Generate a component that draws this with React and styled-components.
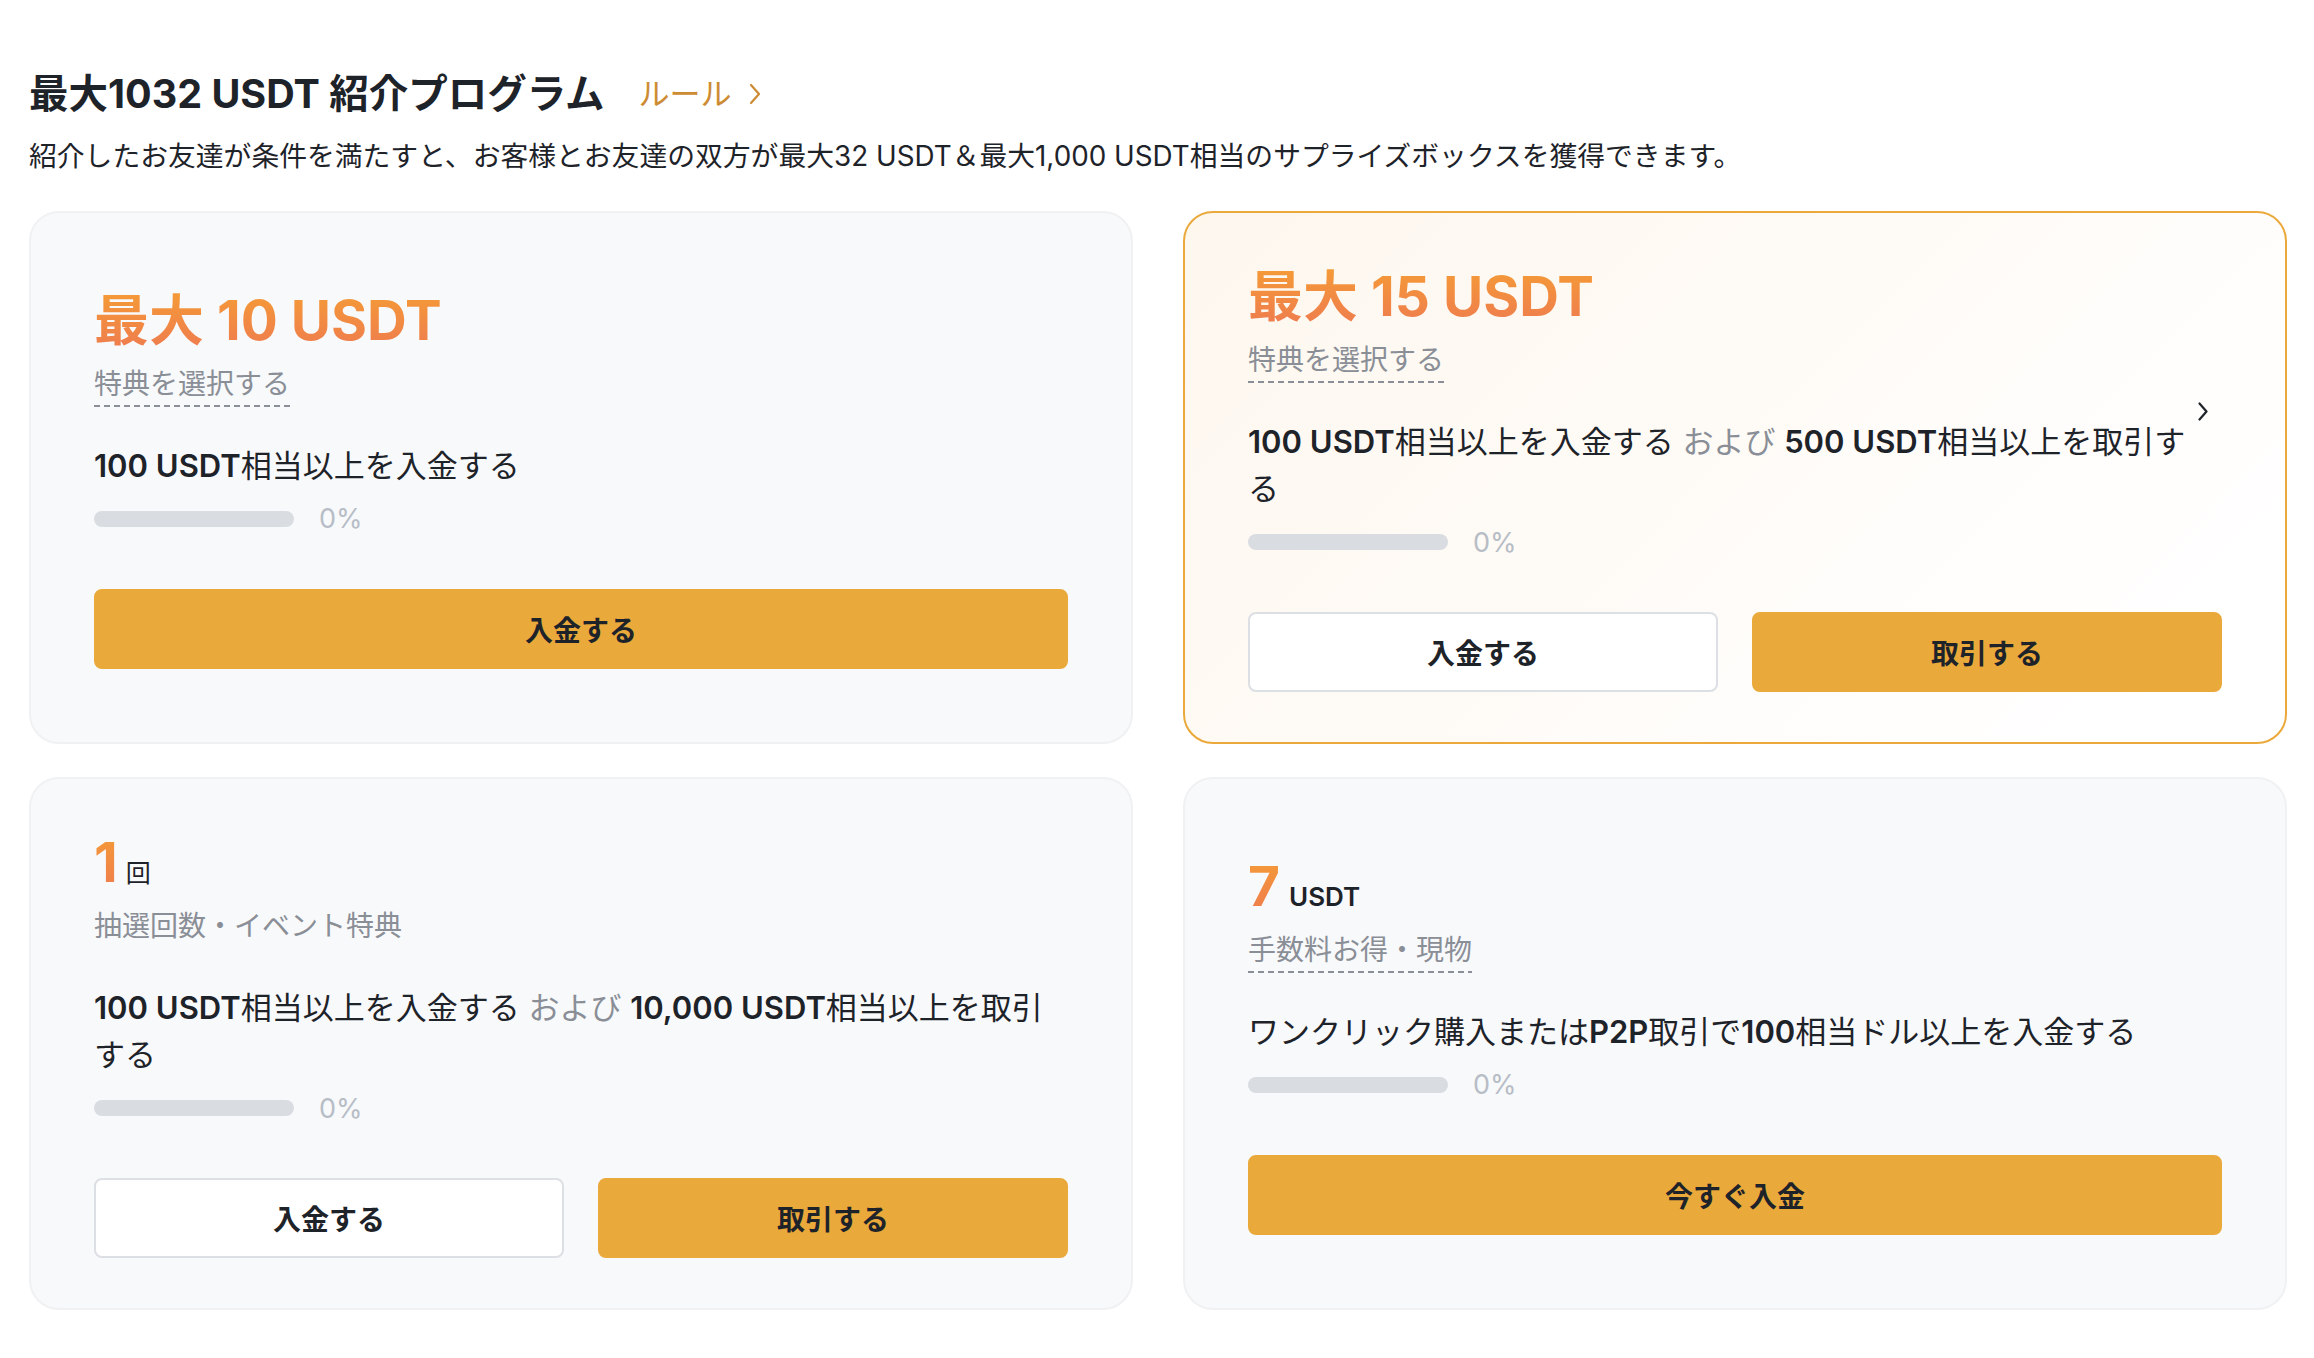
import React from 'react';
import styled, { createGlobalStyle } from 'styled-components';

const GlobalStyle = createGlobalStyle`
  body {
    margin: 0;
    background: #ffffff;
    color: #1e2329;
    font-family: Inter, "Noto Sans CJK JP", sans-serif;
  }
`;

const Page = styled.main`
  padding: 69px 27px 40px 29px;
`;

const TitleRow = styled.div`
  display: flex;
  align-items: center;
  gap: 34px;
`;

const Title = styled.h1`
  margin: 0;
  font-size: 39.5px;
  line-height: 50px;
  font-weight: 700;
  color: #1e2329;
`;

const RuleLink = styled.a`
  display: flex;
  align-items: center;
  gap: 18px;
  font-size: 31px;
  line-height: 40px;
  color: #cd8c33;
  text-decoration: none;
`;

const Intro = styled.p`
  margin: 18px 0 0;
  font-size: 27.8px;
  line-height: 38px;
  color: #1e2329;
`;

const Grid = styled.div`
  margin-top: 36px;
  display: grid;
  grid-template-columns: 1fr 1fr;
  column-gap: 50px;
  row-gap: 33px;
`;

const Card = styled.section`
  display: flex;
  flex-direction: column;
  justify-content: center;
  padding: 50px 63px;
  border-radius: 30px;
  border: 2px solid ${(p) => (p.$active ? '#eba93b' : '#f0f1f3')};
  background: ${(p) =>
    p.$active
      ? 'linear-gradient(135deg, #fdf7ee 0%, #fefaf5 40%, #fffefd 75%, #ffffff 100%)'
      : '#f8f9fb'};
`;

const Reward = styled.div`
  font-size: 55px;
  line-height: 67px;
  font-weight: 700;
  white-space: nowrap;
`;

const Gradient = styled.span`
  background: linear-gradient(180deg, #f59d35 0%, #ee7a50 100%);
  -webkit-background-clip: text;
  background-clip: text;
  color: transparent;
`;

const Unit = styled.span`
  margin-left: ${(p) => p.$gap}px;
  font-size: ${(p) => p.$size}px;
  font-weight: ${(p) => p.$weight};
  line-height: 1;
  color: #1e2329;
`;

const Label = styled.div`
  align-self: flex-start;
  margin-top: 12px;
  padding-bottom: 5px;
  font-size: 28px;
  line-height: 36px;
  color: #8a8e96;
  background: ${(p) =>
    p.$dashed
      ? 'repeating-linear-gradient(to right, #8a8e96 0 6px, transparent 6px 10px) left bottom / 100% 2px no-repeat'
      : 'none'};
`;

const ConditionRow = styled.div`
  margin-top: 35px;
  display: flex;
  gap: 8px;
`;

const Condition = styled.p`
  flex: 1;
  margin: 0;
  font-size: 31px;
  line-height: 47px;
  color: #1e2329;
`;

const Strong = styled.span`
  font-weight: 600;
`;

const Muted = styled.span`
  color: #8a8e96;
`;

const Chevron = styled.svg`
  flex: none;
  align-self: flex-start;
  margin: -16px 14px 0 0;
`;

const ProgressRow = styled.div`
  margin-top: 12px;
  height: 36px;
  display: flex;
  align-items: center;
  gap: 25px;
`;

const Track = styled.div`
  width: 200px;
  height: 16px;
  border-radius: 8px;
  background: #d9dce1;
  overflow: hidden;
`;

const Fill = styled.div`
  height: 100%;
  background: #eaa93b;
`;

const Percent = styled.span`
  font-size: 27px;
  color: #b7bdc6;
`;

const Actions = styled.div`
  margin-top: 52px;
  display: flex;
  gap: 34px;
`;

const Button = styled.button`
  flex: 1;
  height: 80px;
  border-radius: 8px;
  font-family: inherit;
  font-size: 28px;
  font-weight: 700;
  color: #1e2329;
  cursor: pointer;
  border: 2px solid ${(p) => (p.$outline ? '#dcdfe3' : '#eaa93b')};
  background: ${(p) => (p.$outline ? '#ffffff' : '#eaa93b')};
`;

const cards = [
  {
    id: 'deposit',
    reward: <Gradient>最大 10 USDT</Gradient>,
    label: '特典を選択する',
    dashed: true,
    condition: (
      <>
        <Strong>100 USDT</Strong>相当以上を入金する
      </>
    ),
    buttons: [{ text: '入金する' }],
  },
  {
    id: 'trade',
    active: true,
    arrow: true,
    reward: <Gradient>最大 15 USDT</Gradient>,
    label: '特典を選択する',
    dashed: true,
    condition: (
      <>
        <Strong>100 USDT</Strong>相当以上を入金する <Muted>および</Muted>{' '}
        <Strong>500 USDT</Strong>相当以上を取引する
      </>
    ),
    buttons: [{ text: '入金する', outline: true }, { text: '取引する' }],
  },
  {
    id: 'lottery',
    reward: (
      <>
        <Gradient>1</Gradient>
        <Unit $gap={8} $size={25} $weight={400}>回</Unit>
      </>
    ),
    label: '抽選回数・イベント特典',
    condition: (
      <>
        <Strong>100 USDT</Strong>相当以上を入金する <Muted>および</Muted>{' '}
        <Strong>10,000 USDT</Strong>相当以上を取引する
      </>
    ),
    buttons: [{ text: '入金する', outline: true }, { text: '取引する' }],
  },
  {
    id: 'fee',
    reward: (
      <>
        <Gradient>7</Gradient>
        <Unit $gap={9} $size={26} $weight={600}>USDT</Unit>
      </>
    ),
    label: '手数料お得・現物',
    dashed: true,
    condition: (
      <>
        ワンクリック購入または<Strong>P2P</Strong>取引で<Strong>100</Strong>相当ドル以上を入金する
      </>
    ),
    buttons: [{ text: '今すぐ入金' }],
  },
];

const RewardCard = ({ card, progress = 0 }) => (
  <Card $active={card.active}>
    <Reward>{card.reward}</Reward>
    <Label $dashed={card.dashed}>{card.label}</Label>
    <ConditionRow>
      <Condition>{card.condition}</Condition>
      {card.arrow && (
        <Chevron width="10" height="19" viewBox="0 0 10 19" fill="none">
          <path d="M1.5 1.5L8.5 9.5L1.5 17.5" stroke="#1e2329" strokeWidth="2.2" strokeLinecap="round" strokeLinejoin="round" />
        </Chevron>
      )}
    </ConditionRow>
    <ProgressRow>
      <Track>
        <Fill style={{ width: `${progress}%` }} />
      </Track>
      <Percent>{progress}%</Percent>
    </ProgressRow>
    <Actions>
      {card.buttons.map((b) => (
        <Button key={b.text} $outline={b.outline}>
          {b.text}
        </Button>
      ))}
    </Actions>
  </Card>
);

const App = () => {
  return (
    <Page>
      <GlobalStyle />
      <TitleRow>
        <Title>最大1032 USDT 紹介プログラム</Title>
        <RuleLink href="#">
          ルール
          <svg width="12" height="22" viewBox="0 0 12 22" fill="none">
            <path d="M2 2L10 11L2 20" stroke="#cd8c33" strokeWidth="2.2" strokeLinecap="round" strokeLinejoin="round" />
          </svg>
        </RuleLink>
      </TitleRow>
      <Intro>
        紹介したお友達が条件を満たすと、お客様とお友達の双方が最大32 USDT＆最大1,000 USDT相当のサプライズボックスを獲得できます。
      </Intro>
      <Grid>
        {cards.map((card) => (
          <RewardCard key={card.id} card={card} />
        ))}
      </Grid>
    </Page>
  );
};

export default App;
